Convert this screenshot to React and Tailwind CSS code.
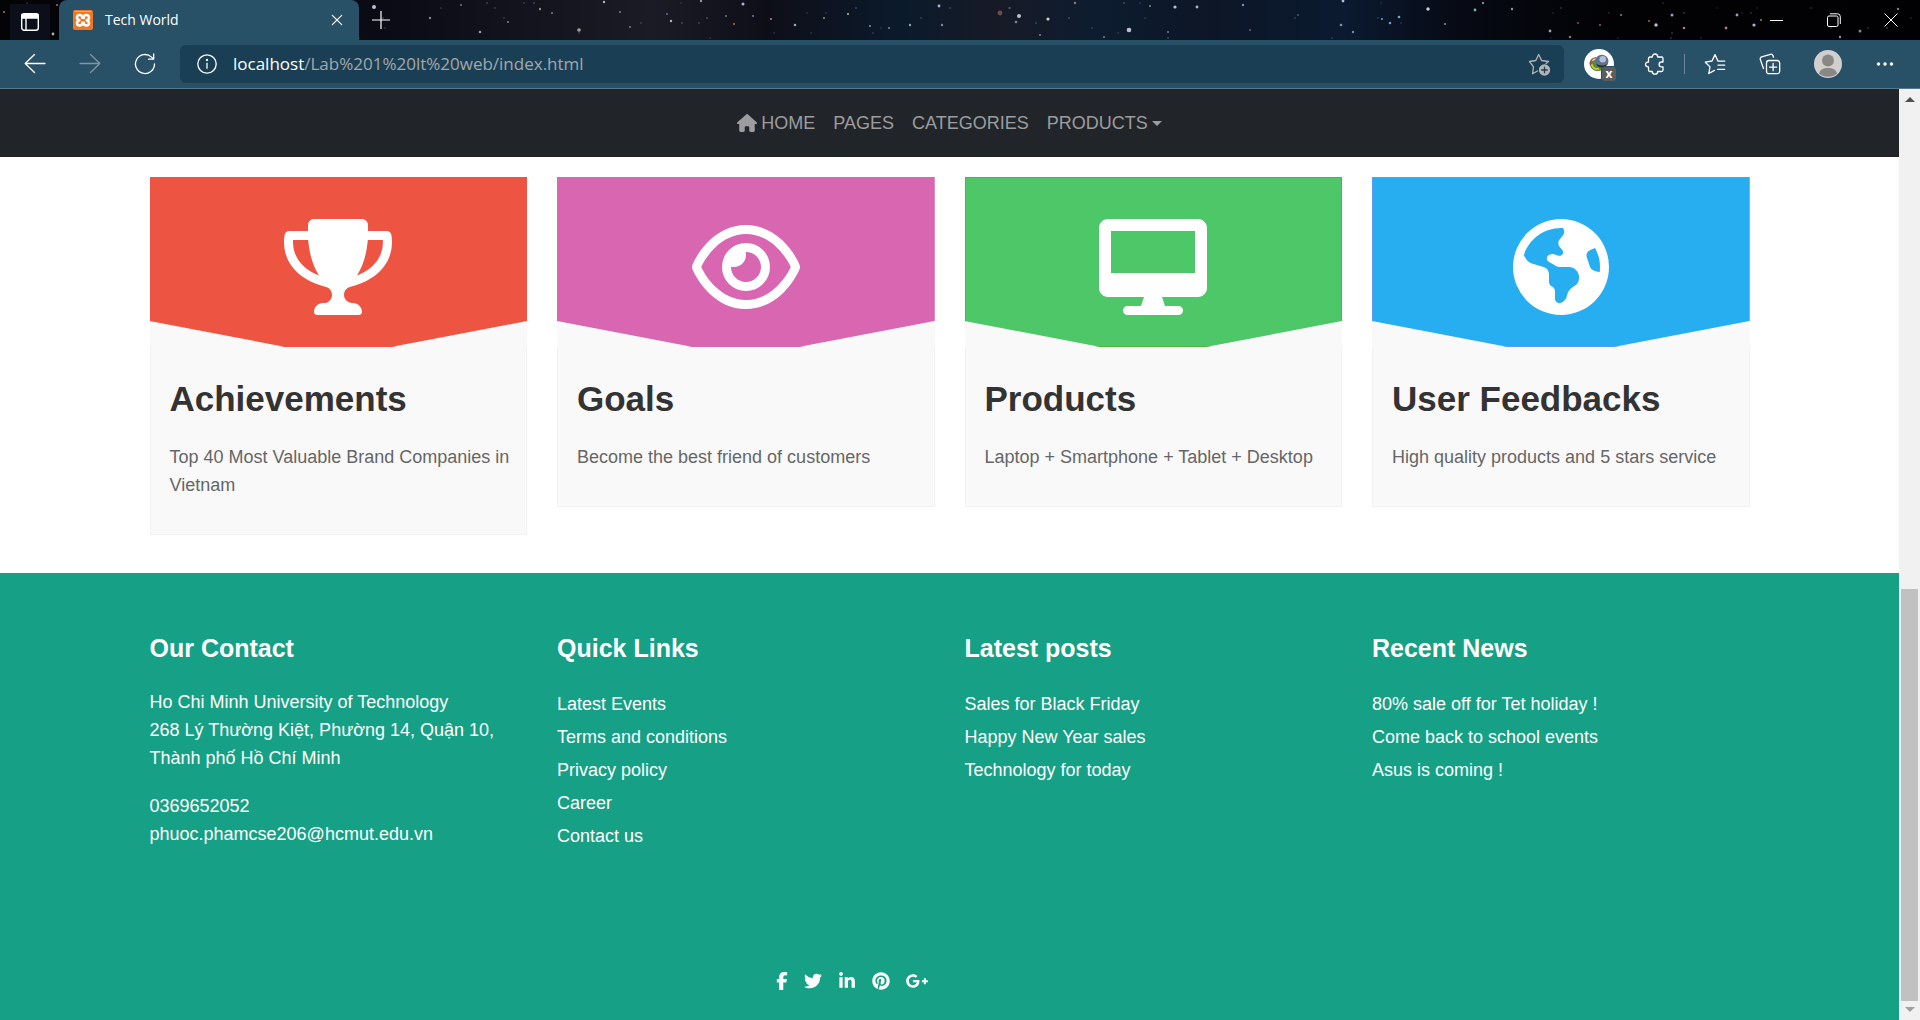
import React from "react";
import {
  FaRegEye,
  FaEarthAmericas,
  FaHouse,
  FaFacebookF,
  FaTwitter,
  FaLinkedinIn,
  FaPinterest,
  FaGooglePlusG,
} from "react-icons/fa6";

const uiFont = "font-['Open_Sans','Noto_Sans',sans-serif]";

function Line({ children, className = "size-6", w = 1.3 }) {
  return (
    <svg viewBox="0 0 24 24" fill="none" stroke="currentColor" strokeWidth={w} strokeLinecap="round" strokeLinejoin="round" className={className} aria-hidden="true">
      {children}
    </svg>
  );
}

function TrophyIcon({ className }) {
  return (
    <svg viewBox="0 0 576 512" fill="currentColor" className={className} aria-hidden="true">
      <path d="M572.1 82.38C569.5 71.59 559.8 64 548.7 64h-100.8c.24-12.45 .1-23.7-.15-33.02C447.3 13.63 433.2 0 415.8 0H160.2C142.8 0 128.7 13.63 128.2 30.98C127.9 40.3 127.8 51.55 128.1 64H27.26C16.16 64 6.54 71.59 3.91 82.38C3.1 85.78-15.71 167.2 37.07 245.9c37.44 55.82 100.6 95.03 187.5 117.4c18.7 4.8 31.41 22.06 31.41 41.37C256 428.5 236.5 448 212.6 448H208c-26.53 0-48 21.47-48 48c0 8.84 7.16 16 16 16h224c8.84 0 16-7.16 16-16C416 469.5 394.5 448 368 448h-4.64c-23.86 0-43.36-19.5-43.36-43.35c0-19.31 12.71-36.57 31.41-41.37c86.96-22.34 150.1-61.55 187.5-117.4C591.7 167.2 572.9 85.78 572.1 82.38zM77.41 219.8C49.47 178.6 47.01 135.7 48.38 112h80.39c5.36 59.62 20.35 131.1 57.67 189.1C137.4 281.6 100.9 254.4 77.41 219.8zM498.6 219.8c-23.44 34.6-59.94 61.79-109 81.22C426.9 243.1 441.9 171.6 447.2 112h80.39C528.1 135.7 526.5 178.7 498.6 219.8z" />
    </svg>
  );
}

function DesktopIcon({ className }) {
  return (
    <svg viewBox="0 0 576 512" fill="currentColor" className={className} aria-hidden="true">
      <path d="M528 0h-480C21.5 0 0 21.5 0 48v320C0 394.5 21.5 416 48 416h192L224 464H152C138.8 464 128 474.8 128 488S138.8 512 152 512h272c13.25 0 24-10.75 24-24s-10.75-24-24-24H352L336 416h192c26.5 0 48-21.5 48-48v-320C576 21.5 554.5 0 528 0zM512 288H64V64h448V288z" />
    </svg>
  );
}

/* x, y, radius, colour of each star in the title bar artwork */
const stars = [
  [374, 7, 2, "#dde"], [430, 18, 1.2, "#99a"], [461, 5, 1, "#889"], [480, 32, 1.3, "#aab"], [508, 22, 1, "#99a"], [540, 9, 1.2, "#a98"],
  [552, 13, 1, "#98a"], [579, 30, 1.8, "#bbb"], [604, 2, 1.2, "#ccd"], [620, 12, 1, "#a88"], [630, 27, 1, "#889"], [667, 14, 1, "#77b"],
  [671, 21, 1.2, "#ccd"], [701, 1, 1.2, "#aaa"], [726, 16, 1, "#889"], [734, 24, 1, "#b93"], [743, 4, 1.5, "#ccf"], [753, 16, 1, "#88b"],
  [771, 19, 1, "#c9a"], [795, 25, 1.3, "#bbc"], [824, 18, 1, "#aa7"], [848, 14, 1.1, "#cc9"], [870, 26, 1, "#8ad"], [889, 28, 1, "#89c"],
  [910, 25, 1.2, "#bad"], [939, 6, 1.4, "#ccf"], [942, 25, 1.2, "#99b"], [1000, 13, 2.4, "#7a5654"], [1019, 16, 2, "#dde"], [1016, 22, 1.3, "#89a"],
  [1048, 19, 1.6, "#eee"], [1040, 35, 1, "#99b"], [1075, 3, 1.2, "#a88"], [1104, 37, 1, "#98a"], [1129, 30, 2.3, "#dde"], [1150, 6, 1, "#a99"],
  [1175, 7, 1.6, "#dde"], [1197, 7, 1.4, "#cce"], [1168, 32, 1, "#88a"], [1243, 5, 1.2, "#99c"], [1250, 30, 1, "#778"],
  [1298, 15, 1, "#567"], [1343, 1, 1.4, "#cde"], [1341, 25, 1.3, "#8ab"], [1353, 32, 1.2, "#89c"], [1382, 19, 1.1, "#6bd"], [1390, 23, 1.3, "#6bd"],
  [1399, 17, 1.3, "#9bd"], [1428, 9, 1.7, "#eee"], [1445, 24, 1, "#99a"], [1475, 10, 1.4, "#8cd"], [1483, 3, 1.2, "#99a"], [1512, 9, 1.2, "#aab"],
  [1550, 31, 1.4, "#bbc"], [1570, 37, 1.3, "#987"], [1578, 23, 1, "#965"], [1600, 25, 1, "#a76"], [1621, 15, 1, "#99a"], [1649, 21, 1, "#b75"],
  [1656, 25, 1.7, "#dde"], [1672, 15, 1.5, "#bbd"], [1684, 28, 1.3, "#c9a"], [1726, 28, 1.4, "#b99"], [1737, 15, 1.4, "#bbd"], [1754, 25, 1.6, "#ccf"],
  [1761, 20, 1, "#b96"], [1840, 37, 1.2, "#aab"], [1860, 31, 1.5, "#99a"], [1898, 9, 1.2, "#999"], [4, 12, 1, "#a89"], [57, 5, 1, "#a89"], [53, 34, 1.4, "#ccc"],
];

function Starfield() {
  return (
    <svg className="absolute inset-0 h-10 w-full" viewBox="0 0 1920 40" preserveAspectRatio="none" aria-hidden="true">
      <defs>
        <linearGradient id="sky" x1="0" x2="1" y1="0" y2="0">
          <stop offset="0" stopColor="#040306" />
          <stop offset="0.2" stopColor="#0b0b15" />
          <stop offset="0.34" stopColor="#1a1b25" />
          <stop offset="0.4" stopColor="#0e0e19" />
          <stop offset="0.47" stopColor="#0b1a2b" />
          <stop offset="0.52" stopColor="#171a26" />
          <stop offset="0.57" stopColor="#0d1c2f" />
          <stop offset="0.63" stopColor="#0c1626" />
          <stop offset="0.7" stopColor="#0b1a30" />
          <stop offset="0.76" stopColor="#070a14" />
          <stop offset="0.84" stopColor="#020204" />
          <stop offset="1" stopColor="#010103" />
        </linearGradient>
      </defs>
      <rect width="1920" height="40" fill="url(#sky)" />
      {stars.map(([x, y, r, c]) => (
        <circle key={x + "-" + y} cx={x} cy={y} r={r} fill={c} opacity="0.85" />
      ))}
      {stars.map(([x, y, , c]) => (
        <circle key={"b" + x + "-" + y} cx={(x * 7 + 311) % 1920} cy={(y * 5 + 13) % 40} r="0.8" fill={c} opacity="0.4" />
      ))}
    </svg>
  );
}

function TitleBar() {
  return (
    <div className="relative flex h-10 items-stretch text-white">
      <Starfield />
      <button type="button" aria-label="Tab actions" className="relative mt-1 ml-2.5 flex h-9 w-10 items-center justify-center bg-[#0c0e19]">
        <svg viewBox="0 0 20 20" className="size-5" fill="none" stroke="currentColor" strokeWidth="1.4" aria-hidden="true">
          <rect x="1.7" y="1.7" width="16.6" height="16.6" rx="2.5" />
          <path d="M2 2.5h16v3.5H2z" fill="currentColor" />
          <path d="M6 6v12" />
        </svg>
      </button>
      <div className="relative ml-[9px] flex w-[300px] items-center rounded-t-lg bg-[#285067] px-3.5">
        <svg viewBox="0 0 20 20" className="size-5 shrink-0" aria-hidden="true">
          <rect width="20" height="20" rx="2" fill="#f37623" />
          <path d="M2 1.5h16" stroke="#f9b98a" strokeWidth="1" />
          <g fill="none" stroke="#fff" strokeWidth="2.5" strokeLinejoin="round" strokeLinecap="round">
            <path d="M9.200 7.500C9.200 5.800 8.300 5 6.800 5C4.900 5 4 6 4 7.400C4 8.800 5 9.700 6.400 10.200C5 10.700 4 11.600 4 13C4 14.500 5 15.500 6.800 15.500C8.300 15.500 9.200 14.600 9.200 13" />
            <path d="M10.800 7.500C10.800 5.800 11.700 5 13.200 5C15.100 5 16 6 16 7.400C16 8.800 15 9.700 13.600 10.200C15 10.700 16 11.600 16 13C16 14.500 15 15.500 13.200 15.500C11.700 15.500 10.800 14.600 10.800 13" />
          </g>
          <path d="M8 7.500h4v1.300H8zM8 11.800h4v1.300H8z" fill="#fff" />
        </svg>
        <span className={`${uiFont} ml-3 grow text-sm`}>Tech World</span>
        <button type="button" aria-label="Close tab" className="flex size-4 items-center justify-center">
          <Line className="size-4" w={1.8}><path d="M5 5l14 14M19 5L5 19" /></Line>
        </button>
      </div>
      <button type="button" aria-label="New tab" className="relative ml-[13px] flex items-center">
        <svg viewBox="0 0 18 18" className="size-[18px]" stroke="currentColor" strokeWidth="1.2" aria-hidden="true"><path d="M9 0v18M0 9h18" /></svg>
      </button>
      <div className="relative mr-px ml-auto flex">
        <button type="button" aria-label="Minimize" className="flex w-[57px] items-center justify-center">
          <svg viewBox="0 0 14 14" className="size-3.5" stroke="currentColor" aria-hidden="true"><path d="M0 7.500h13" /></svg>
        </button>
        <button type="button" aria-label="Restore" className="flex w-[57px] items-center justify-center">
          <svg viewBox="0 0 14 14" className="size-3.5" fill="none" stroke="currentColor" aria-hidden="true">
            <rect x="0.500" y="3" width="10.500" height="10.500" rx="1.500" />
            <path d="M3 0.800h7.500a2.800 2.800 0 0 1 2.800 2.800V11" />
          </svg>
        </button>
        <button type="button" aria-label="Close" className="flex w-[57px] items-center justify-center">
          <svg viewBox="0 0 14 14" className="size-3.5" stroke="currentColor" aria-hidden="true"><path d="M0.500 0.500l13 13M13.500 0.500l-13 13" /></svg>
        </button>
      </div>
    </div>
  );
}

function Toolbar() {
  return (
    <div className="flex h-[49px] items-center border-b border-[#55788c] bg-[#285067] text-white">
      <div className="flex w-[180px] shrink-0 items-center gap-[31px] pl-[23px]">
        <button type="button" aria-label="Back"><Line><path d="M22 11.500H2.500M11.500 2.500L2.200 11.500l9.300 9" /></Line></button>
        <button type="button" aria-label="Forward" className="text-[#7d97a5]"><Line><path d="M2 11.500h19.500M12.500 2.500L21.800 11.500l-9.300 9" /></Line></button>
        <button type="button" aria-label="Refresh"><Line><path d="M21.500 12A9.500 9.500 0 1 1 18.500 5.100L20.500 7M20.700 2v5.200h-5.200" /></Line></button>
      </div>
      <div className="flex h-[38px] grow items-center rounded-md bg-[#1a3f54] pr-3 pl-[17px]">
        <svg viewBox="0 0 20 20" className="size-5 shrink-0" fill="none" stroke="currentColor" strokeWidth="1.300" aria-hidden="true">
          <circle cx="10" cy="10" r="9.200" /><path d="M10 8.800v6" /><circle cx="10" cy="6" r="0.500" fill="currentColor" />
        </svg>
        <a href="#address" className={`${uiFont} ml-4 grow text-[17px] text-[#a3a8ab]`}>
          <span className="text-white">localhost</span>/Lab%201%20lt%20web/index.html
        </a>
        <button type="button" aria-label="Add to favorites" className="text-[#b4b4b4]">
          <Line>
            <path d="M9.500 19l-5 2.800 1-7L1.500 9.500l6.300-1L10.700 2.500l2.900 6 6.900 1-2.500 2" />
            <circle cx="16.500" cy="18" r="5" fill="currentColor" />
            <path d="M16.500 15.200v5.600M13.700 18h5.600" stroke="#1a3f54" />
          </Line>
        </button>
      </div>
      <div className="flex shrink-0 items-center">
        <button type="button" aria-label="Download manager" className="relative ml-5 size-[30px]">
          <svg viewBox="0 0 32 32" className="size-[30px]" aria-hidden="true">
            <circle cx="16" cy="16" r="16" fill="#fff" />
            <path d="M6 14c0 7 5 11 13 9l4-6-9-7z" fill="#4f8f3a" />
            <path d="M8 16c1 4 4 6 8 5" stroke="#d9c23a" strokeWidth="2" fill="none" />
            <path d="M7 17c-1-5 3-9 8-7" stroke="#a8453a" strokeWidth="1.500" fill="none" />
            <circle cx="19" cy="13" r="7" fill="#60718c" />
            <circle cx="20" cy="11" r="3.500" fill="#b4c0d6" />
            <path d="M13 16c2 5 9 5 12 0-3 2-8 2-12 0z" fill="#2c3420" />
          </svg>
          <span className={`${uiFont} absolute -right-[3px] -bottom-[3px] flex size-4 items-center justify-center rounded-sm border border-[#285067] bg-[#5c5c5c] text-xs leading-3 font-bold`}>x</span>
        </button>
        <button type="button" aria-label="Extensions" className="ml-7">
          <Line><path d="M8 5h2.300c0-4 5.400-4 5.400 0h3.800a1.500 1.500 0 0 1 1.500 1.500V10h-1.500a2.400 2.400 0 0 0 0 4.800H21V18a1.500 1.500 0 0 1-1.500 1.500h-3.800c0 3.600-5.400 3.600-5.400 0H8A1.500 1.500 0 0 1 6.500 18v-3.200c-4 0-4-4.800 0-4.800V6.500A1.500 1.500 0 0 1 8 5z" /></Line>
        </button>
        <span className="ml-[18px] h-5 w-px bg-[#6c8796]" />
        <button type="button" aria-label="Favorites" className="ml-[18px]">
          <Line><path d="M21.700 9.200H15L12 2.600 9 9l-6.700 1.200L7 14.900l-1.200 6.600 5.700-3.100M15 13.200h6.700M14.500 17.300h7.200" /></Line>
        </button>
        <button type="button" aria-label="Collections" className="ml-[31px]">
          <Line><rect x="8.500" y="8.500" width="13.200" height="13.200" rx="2.500" /><path d="M15.100 11.500v7.200M11.500 15.100h7.200M5.500 16.500L2.300 7.500a2 2 0 0 1 1.300-2.600l8.800-2.600a2 2 0 0 1 2.500 1.300L15.500 5.200" /></Line>
        </button>
        <button type="button" aria-label="Profile" className="ml-8">
          <svg viewBox="0 0 28 28" className="size-7" aria-hidden="true">
            <circle cx="14" cy="14" r="14" fill="#d2d0ce" />
            <circle cx="14" cy="10.500" r="6" fill="#8a8886" />
            <path d="M5 23.500c1-4 4-5.500 9-5.500s8 1.500 9 5.500a14 14 0 0 1-18 0z" fill="#8a8886" />
          </svg>
        </button>
        <button type="button" aria-label="Settings and more" className="mr-[25px] ml-[33px]">
          <svg viewBox="0 0 20 6" className="h-1.5 w-5" fill="currentColor" aria-hidden="true"><circle cx="3.500" cy="3" r="1.700" /><circle cx="10" cy="3" r="1.700" /><circle cx="16.500" cy="3" r="1.700" /></svg>
        </button>
      </div>
    </div>
  );
}

const cards = [
  { title: "Achievements", text: "Top 40 Most Valuable Brand Companies in Vietnam", Icon: TrophyIcon, head: "bg-[#ee5442] border-[#ee5442]" },
  { title: "Goals", text: "Become the best friend of customers", Icon: FaRegEye, head: "bg-[#d866b0] border-[#d866b0]" },
  { title: "Products", text: "Laptop + Smartphone + Tablet + Desktop", Icon: DesktopIcon, head: "bg-[#4dc768] border-[#56b33e]" },
  { title: "User Feedbacks", text: "High quality products and 5 stars service", Icon: FaEarthAmericas, head: "bg-[#26aef1] border-[#5a9cf0]" },
];

const linkGroups = [
  { title: "Quick Links", links: ["Latest Events", "Terms and conditions", "Privacy policy", "Career", "Contact us"] },
  { title: "Latest posts", links: ["Sales for Black Friday", "Happy New Year sales", "Technology for today"] },
  { title: "Recent News", links: ["80% sale off for Tet holiday !", "Come back to school events", "Asus is coming !"] },
];

const socials = [
  ["Facebook", FaFacebookF, "w-3.5"],
  ["Twitter", FaTwitter, "w-5"],
  ["LinkedIn", FaLinkedinIn, "w-5"],
  ["Pinterest", FaPinterest, "w-5"],
  ["Google Plus", FaGooglePlusG, "w-6"],
];

function Nav() {
  return (
    <nav className="flex h-[68px] items-center justify-center gap-[18px] bg-[#212529] text-lg text-[#9b9d9e]">
      <a href="#home" className="flex items-center gap-1"><FaHouse className="size-5" />HOME</a>
      <a href="#pages">PAGES</a>
      <a href="#categories">CATEGORIES</a>
      <button type="button" className="flex items-center gap-1">
        PRODUCTS
        <span className="border-x-[5px] border-t-[5px] border-x-transparent border-t-current" />
      </button>
    </nav>
  );
}

function Card({ title, text, Icon, head }) {
  return (
    <article className="border border-[#f1f1f1] bg-[#f9f9f9]">
      <div className="-mx-px -mt-px bg-[#f9f9f9]">
        <div className={`flex h-[170px] justify-center border pt-[41px] text-white [clip-path:polygon(0_0,100%_0,100%_144px,calc(100%-136px)_100%,136px_100%,0_144px)] ${head}`}>
          <Icon className="h-24 w-[108px]" />
        </div>
      </div>
      <div className="pt-[31px] pr-3 pb-[35px] pl-[19px]">
        <h2 className="text-[35px] leading-[42px] font-bold text-[#333]">{title}</h2>
        <p className="mt-[23px] text-lg leading-7 text-[#666]">{text}</p>
      </div>
    </article>
  );
}

function Footer() {
  return (
    <footer className="flex grow flex-col items-center bg-[#16a085] text-white">
      <div className="grid w-full max-w-[1600px] grid-cols-4 gap-[30px] pt-[60px]">
        <section>
          <h3 className="text-[25px] leading-[30px] font-bold">Our Contact</h3>
          <address className="mt-[25px] text-lg leading-7 not-italic">
            <p>Ho Chi Minh University of Technology<br />268 Lý Thường Kiệt, Phường 14, Quận 10, Thành phố Hồ Chí Minh</p>
            <p className="mt-5">0369652052<br />phuoc.phamcse206@hcmut.edu.vn</p>
          </address>
        </section>
        {linkGroups.map(({ title, links }) => (
          <section key={title}>
            <h3 className="text-[25px] leading-[30px] font-bold">{title}</h3>
            <ul className="mt-[25px] text-lg leading-[33px]">
              {links.map((l) => (
                <li key={l}><a href="#link">{l}</a></li>
              ))}
            </ul>
          </section>
        ))}
      </div>
      <ul className="mt-[119px] flex w-full max-w-[1600px] items-center gap-3.5 pl-[625px]">
        {socials.map(([name, Icon, size]) => (
          <li key={name}><a href="#social" aria-label={name} className="flex justify-center"><Icon className={`h-[18px] ${size}`} /></a></li>
        ))}
      </ul>
    </footer>
  );
}

export default function App() {
  return (
    <div className="flex h-screen flex-col overflow-hidden bg-white font-['Liberation_Sans',Arial,sans-serif]">
      <header>
        <TitleBar />
        <Toolbar />
      </header>
      <div className="flex min-h-0 grow">
        <div className="flex min-w-0 grow flex-col overflow-hidden">
          <Nav />
          <main className="flex justify-center pt-5 pb-[38px]">
            <div className="grid w-full max-w-[1600px] grid-cols-4 items-start gap-[30px]">
              {cards.map((c) => <Card key={c.title} {...c} />)}
            </div>
          </main>
          <Footer />
        </div>
        <div className="flex w-[21px] shrink-0 flex-col items-center bg-[#f1f1f1] py-2" aria-hidden="true">
          <span className="border-x-[5px] border-b-[5px] border-x-transparent border-b-[#505050]" />
          <span className="mt-[487px] mb-1.5 w-[17px] grow bg-[#c1c1c1]" />
          <span className="border-x-[5px] border-t-[5px] border-x-transparent border-t-[#a0a0a0]" />
        </div>
      </div>
    </div>
  );
}
